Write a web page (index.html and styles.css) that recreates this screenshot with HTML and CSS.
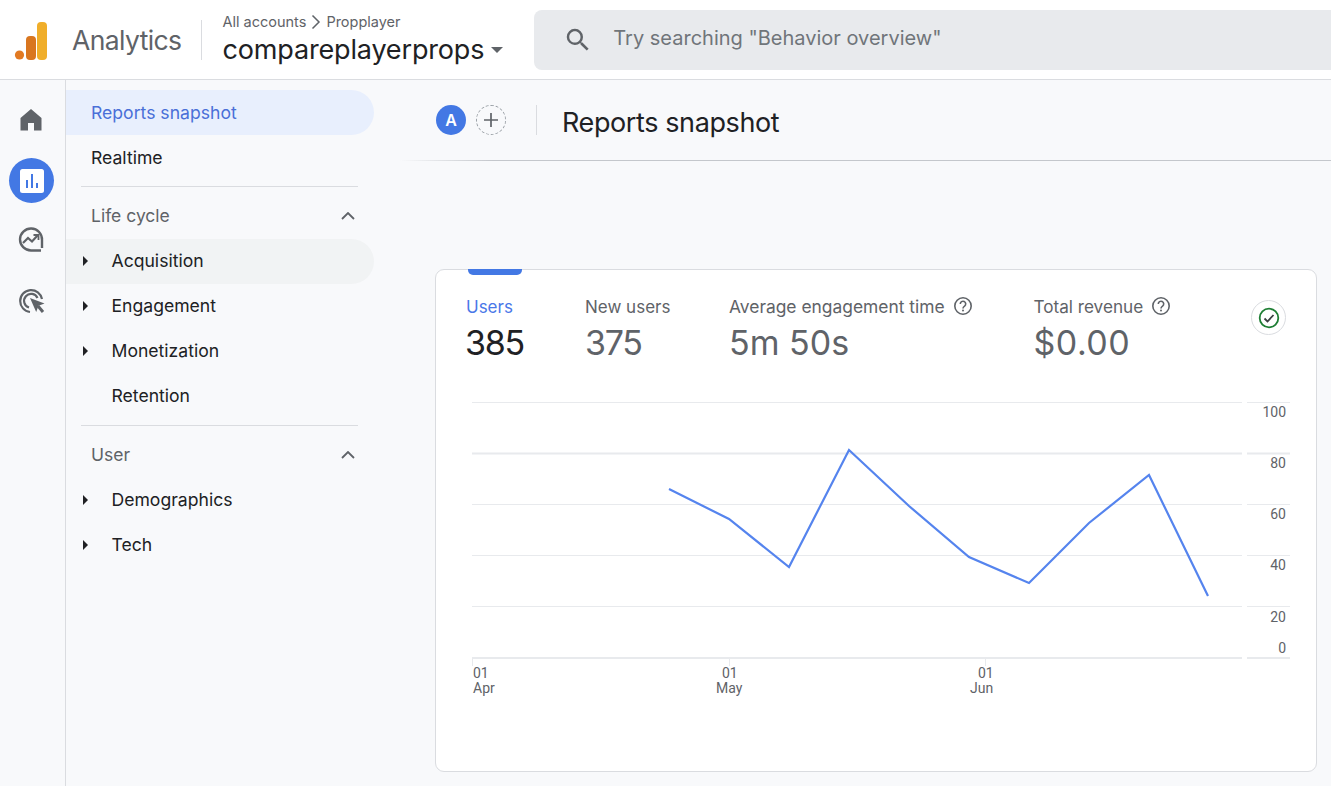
FILE: index.html
```html
<!DOCTYPE html>
<html lang="en">
<head>
<meta charset="utf-8">
<title>Reports snapshot</title>
<link rel="stylesheet" href="styles.css">
</head>
<body>
<header class="topbar">
  <svg class="logo" width="34" height="38" viewBox="0 0 34 38"><rect x="23" y="0" width="10" height="38" rx="4" fill="#f0ae2a"/><rect x="12" y="14" width="10" height="24" rx="4" fill="#d9761f"/><circle cx="5.500" cy="33" r="4.600" fill="#e27a22"/></svg>
  <span class="brand">Analytics</span>
  <span class="brand-sep"></span>
  <div class="account">
    <div class="crumbs"><span>All accounts</span><svg width="12" height="16" viewBox="0 0 12 16"><path d="M2.500 1.500 9 8l-6.500 6.500" fill="none" stroke="#5f6368" stroke-width="1.500"/></svg><span>Propplayer</span></div>
    <div class="property"><span>compareplayerprops</span><svg width="12" height="6" viewBox="0 0 12 6"><path d="M0 0h12L6 6z" fill="#5f6368"/></svg></div>
  </div>
  <div class="search">
    <svg width="30" height="30" viewBox="0 0 24 24"><path d="M15.500 14h-.79l-.28-.27A6.470 6.470 0 0 0 16 9.500 6.500 6.500 0 1 0 9.500 16c1.610 0 3.090-.59 4.230-1.570l.27.28v.79l5 4.990L20.490 19l-4.990-5zm-6 0C7.010 14 5 11.990 5 9.500S7.010 5 9.500 5 14 7.010 14 9.500 11.990 14 9.500 14z" fill="#5f6368"/></svg>
    <span class="search-text">Try searching "Behavior overview"</span>
  </div>
</header>
<div class="body">
  <nav class="rail">
    <div class="rail-btn"><svg class="nudge" width="24" height="24" viewBox="0 0 24 24"><path d="M12 1 1.500 10v12.500H9V15h6v7.500h7.500V10z" fill="#5f6368"/></svg></div>
    <div class="rail-btn rail-on"><svg width="26" height="26" viewBox="0 0 26 26"><rect x="1" y="1" width="24" height="24" rx="2.500" fill="#fff"/><path d="M7 12h2v8H7zM12 6h2v14h-2zM17 15h2v5h-2z" fill="#4378e4"/></svg></div>
    <div class="rail-btn"><svg class="nudge" width="26" height="26" viewBox="0 0 26 26" fill="none" stroke="#5f6368"><path d="M23 23.500H13A11 11 0 1 1 24 13v8" stroke-width="2.400"/><path d="m5 16 5-5 4 3.500 5.500-6" stroke-width="2.200"/><path d="M15.500 8h5v5" stroke-width="1.800"/></svg></div>
    <div class="rail-btn"><svg width="28" height="28" viewBox="0 0 28 28" fill="none" stroke="#5f6368" stroke-width="2.200"><path d="M12 25A11 11 0 1 1 24 12"/><path d="M11 20.500A7 7 0 1 1 19.500 11"/><path d="m12 11 14.500 5.500-6 2.200-2.300 6.300z" fill="#5f6368" stroke="none"/><path d="m20 19 5 6" stroke-width="3"/></svg></div>
  </nav>
  <aside class="nav">
    <a class="item item-active">Reports snapshot</a>
    <a class="item">Realtime</a>
    <div class="rule"></div>
    <div class="group"><span>Life cycle</span><svg width="14" height="8" viewBox="0 0 14 8"><path d="M1 7l6-6 6 6" fill="none" stroke="#5f6368" stroke-width="1.800"/></svg></div>
    <a class="item sub item-hover"><i class="caret"></i>Acquisition</a>
    <a class="item sub"><i class="caret"></i>Engagement</a>
    <a class="item sub"><i class="caret"></i>Monetization</a>
    <a class="item sub"><i class="caret caret-none"></i>Retention</a>
    <div class="rule"></div>
    <div class="group"><span>User</span><svg width="14" height="8" viewBox="0 0 14 8"><path d="M1 7l6-6 6 6" fill="none" stroke="#5f6368" stroke-width="1.800"/></svg></div>
    <a class="item sub"><i class="caret"></i>Demographics</a>
    <a class="item sub"><i class="caret"></i>Tech</a>
  </aside>
  <main class="main">
    <div class="subhead">
      <span class="avatar">A</span>
      <span class="add"><svg width="16" height="16" viewBox="0 0 16 16"><path d="M8 1v14M1 8h14" stroke="#5f6368" stroke-width="1.700"/></svg></span>
      <span class="sub-sep"></span>
      <h1>Reports snapshot</h1>
    </div>
    <section class="card">
      <span class="tab-mark"></span>
      <div class="metrics">
        <div class="metric m1 metric-on"><div class="m-label">Users</div><div class="m-value">385</div></div>
        <div class="metric m2"><div class="m-label">New users</div><div class="m-value">375</div></div>
        <div class="metric m3"><div class="m-label">Average engagement time<svg class="help" width="20" height="20" viewBox="0 0 20 20"><circle cx="10" cy="10" r="8.200" fill="none" stroke="#5f6368" stroke-width="1.600"/><path d="M7.300 8a2.700 2.700 0 1 1 4.300 2.100c-1 .7-1.600 1.100-1.600 2.300" fill="none" stroke="#5f6368" stroke-width="1.600"/><circle cx="10" cy="14.600" r="1" fill="#5f6368"/></svg></div><div class="m-value">5m 50s</div></div>
        <div class="metric m4"><div class="m-label">Total revenue<svg class="help" width="20" height="20" viewBox="0 0 20 20"><circle cx="10" cy="10" r="8.200" fill="none" stroke="#5f6368" stroke-width="1.600"/><path d="M7.300 8a2.700 2.700 0 1 1 4.300 2.100c-1 .7-1.600 1.100-1.600 2.300" fill="none" stroke="#5f6368" stroke-width="1.600"/><circle cx="10" cy="14.600" r="1" fill="#5f6368"/></svg></div><div class="m-value">$0.00</div></div>
        <span class="status"><svg width="22" height="22" viewBox="0 0 22 22"><circle cx="11" cy="11" r="9.300" fill="none" stroke="#1e7e34" stroke-width="1.800"/><path d="m6.500 11.500 3 3 6-6.500" fill="none" stroke="#3c4043" stroke-width="1.800"/></svg></span>
      </div>
      <svg class="chart" width="880" height="320" viewBox="436 395 880 320">
        <g stroke="#e8eaed" stroke-width="1">
          <path d="M472 402.500H1242M1247 402.500H1290M472 504.500H1242M1247 504.500H1290M472 555.500H1242M1247 555.500H1290M472 606.500H1242M1247 606.500H1290"/>
          <path d="M472 453.500H1242M1247 453.500H1290M472 658H1242M1247 658H1290" stroke-width="2"/>
          <path d="M472.500 658v8M729.500 658v8M985.500 658v8"/>
        </g>
        <polyline points="669,489 729,519 789,567 849,450 909,506 969,557 1029,583 1089,523 1149,475 1208,596" fill="none" stroke="#5584ee" stroke-width="2.200"/>
        <g class="ax" text-anchor="end">
          <text x="1286" y="417">100</text><text x="1286" y="468">80</text><text x="1286" y="519">60</text><text x="1286" y="570">40</text><text x="1286" y="622">20</text><text x="1286" y="653">0</text>
        </g>
        <g class="ax">
          <text x="473" y="678">01</text><text x="473" y="693">Apr</text>
          <text x="722" y="678">01</text><text x="716" y="693">May</text>
          <text x="978" y="678">01</text><text x="970" y="693">Jun</text>
        </g>
      </svg>
    </section>
  </main>
</div>
</body>
</html>
```
FILE: styles.css
```css
* { box-sizing: border-box; }
html, body { margin: 0; height: 100%; overflow: hidden; }
body { width: 1331px; height: 786px; background: #f8f9fb; font-family: Inter, "Noto Sans", sans-serif; color: #202124; display: flex; flex-direction: column; }

.topbar { height: 80px; flex: none; background: #fff; border-bottom: 1px solid #dadce0; display: flex; align-items: center; padding: 0 0 0 14px; }
.logo { margin-top: 3px; }
.brand { margin-left: 24px; font-size: 26.500px; color: #5f6368; letter-spacing: -0.6px; }
.brand-sep { width: 1px; height: 40px; background: #dadce0; margin-left: 20px; }
.account { margin-left: 20px; display: flex; flex-direction: column; gap: 1px; margin-top: 1px; }
.crumbs { display: flex; align-items: center; gap: 4px; font-size: 14.500px; color: #5f6368; line-height: 18px; }
.property { display: flex; align-items: center; gap: 7px; font-size: 27px; line-height: 36px; color: #202124; letter-spacing: -0.16px; white-space: nowrap; }
.search { margin-left: 31px; flex: 1; height: 60px; background: #e8eaed; border-radius: 8px 0 0 8px; display: flex; align-items: center; gap: 20px; padding-left: 29px; font-size: 20px; color: #70757a; white-space: nowrap; }
.search-text { margin-top: -3px; }

.body { flex: 1; display: flex; min-height: 0; }
.rail { width: 66px; flex: none; border-right: 1px solid #dadce0; padding-top: 18px; display: flex; flex-direction: column; gap: 15px; align-items: flex-start; padding-left: 9px; }
.rail-btn { width: 45px; height: 45px; border-radius: 50%; display: flex; align-items: center; justify-content: center; }
.rail-on { background: #4378e4; }
.nudge { margin: -2px 2px 0 0; }

.nav { width: 334px; flex: none; padding-top: 10px; }
.item { display: flex; align-items: center; width: 308px; height: 45px; padding-left: 25px; border-radius: 0 23px 23px 0; font-size: 17.600px; color: #202124; white-space: nowrap; }
.item-active { background: #e8effd; color: #4a6fd8; }
.item-hover { background: #f1f3f4; }
.item.sub { padding: 0 0 2px 16.500px; }
.caret { width: 0; height: 0; border-left: 5.500px solid #202124; border-top: 5px solid transparent; border-bottom: 5px solid transparent; margin-right: 24px; margin-top: 1px; }
.caret-none { border-left-color: transparent; }
.rule { width: 277px; margin: 6px 0 0 15px; border-top: 1px solid #dadce0; }
.group { display: flex; align-items: center; justify-content: space-between; width: 289px; height: 52px; padding: 5px 0 0 25px; font-size: 17.500px; color: #5f6368; }

.main { flex: 1; min-width: 0; display: flex; flex-direction: column; }
.subhead { height: 81px; flex: none; display: flex; align-items: center; padding-left: 36px; background: linear-gradient(90deg, #f8f9fb, #c4c7cc 10%) bottom / 100% 1px no-repeat; }
.avatar { width: 30px; height: 30px; margin-top: -1px; border-radius: 50%; background: #4378e4; color: #fff; font-size: 16px; font-weight: 600; display: flex; align-items: center; justify-content: center; }
.add { width: 30px; height: 30px; margin-top: -1px; margin-left: 10px; border-radius: 50%; border: 1px dashed #9aa0a6; display: flex; align-items: center; justify-content: center; }
.sub-sep { width: 1px; height: 30px; margin-top: -1px; background: #dadce0; margin-left: 30px; }
h1 { margin: 3px 0 0 25px; font-size: 27px; font-weight: 400; letter-spacing: -0.4px; color: #202124; }

.card { margin: 108px 14px 14px 35px; height: 504px; background: #fff; border: 1px solid #dadce0; border-radius: 9px; position: relative; }
.tab-mark { position: absolute; left: 32px; top: -1px; width: 54px; height: 6px; background: #4378e4; border-radius: 0 0 5px 5px; }
.metrics { display: flex; padding: 25px 0 0 30px; height: 125px; position: relative; }
.m1 { width: 119px; } .m2 { width: 144px; } .m3 { width: 304.500px; }
.m-label { display: flex; align-items: center; font-size: 17px; line-height: 24px; color: #5f6368; white-space: nowrap; }
.m3 .m-label { font-size: 17.400px; }
.m4 .m-label { font-size: 17.150px; }
.m-value { font-size: 34px; line-height: 48px; color: #5f6368; white-space: nowrap; }
.m1 .m-value { letter-spacing: -1.300px; margin-left: -1px; }
.m2 .m-value { letter-spacing: -1.300px; }
.m4 .m-value { letter-spacing: 0.500px; }
.metric-on .m-label { color: #4a78e8; }
.metric-on .m-value { color: #202124; }
.help { margin-left: 8px; margin-top: -3px; }
.status { position: absolute; left: 815px; top: 30px; width: 35px; height: 35px; border-radius: 50%; border: 1px solid #dadce0; display: flex; align-items: center; justify-content: center; }
.chart { display: block; }
.ax { font-family: Roboto, sans-serif; font-size: 14px; fill: #5f6368; }
```
